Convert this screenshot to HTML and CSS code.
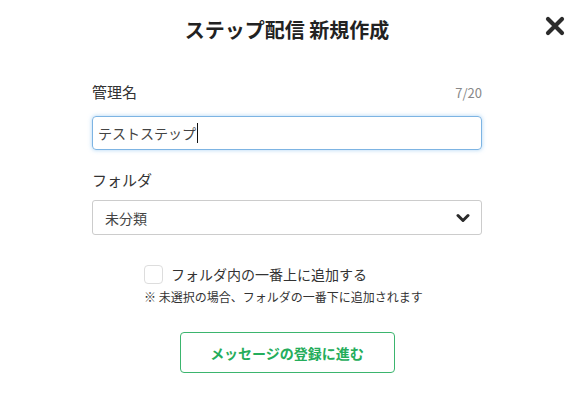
FILE: index.html
```html
<!DOCTYPE html>
<html lang="ja">
<head>
<meta charset="utf-8">
<link rel="stylesheet" href="styles.css">
</head>
<body>
<div class="modal">
  <div class="header">
    <h1 class="title">ステップ配信 新規作成</h1>
    <button class="close" aria-label="閉じる">
      <svg width="20" height="20" viewBox="0 0 20 20"><path d="M3 3 L17 17 M17 3 L3 17" stroke="#2b2b2b" stroke-width="4.2" stroke-linecap="round"/></svg>
    </button>
  </div>
  <div class="form">
    <div class="label-row">
      <span class="label">管理名</span>
      <span class="count">7/20</span>
    </div>
    <div class="input">テストステップ<span class="caret"></span></div>
    <div class="label-row folder-label">
      <span class="label">フォルダ</span>
    </div>
    <div class="select">
      <span>未分類</span>
      <svg width="14" height="10" viewBox="0 0 14 10"><path d="M2 2.5 L7 7.5 L12 2.5" fill="none" stroke="#2b2b2b" stroke-width="3" stroke-linecap="round" stroke-linejoin="round"/></svg>
    </div>
    <div class="check-row">
      <span class="checkbox"></span>
      <span class="check-label">フォルダ内の一番上に追加する</span>
    </div>
    <div class="note">※ 未選択の場合、フォルダの一番下に追加されます</div>
    <div class="actions">
      <button class="next">メッセージの登録に進む</button>
    </div>
  </div>
</div>
</body>
</html>
```

FILE: styles.css
```css
* { box-sizing: border-box; }
html, body { margin: 0; padding: 0; background: #fff; }
body {
  font-family: "Noto Sans CJK JP", "Noto Sans", sans-serif;
  color: #333;
}
.modal { width: 574px; height: 404px; }
.header {
  position: relative;
  height: 60px;
  display: flex;
  align-items: center;
  justify-content: center;
}
.title {
  margin: 0;
  font-size: 20px;
  font-weight: 700;
  color: #222;
  line-height: 24px;
}
.close {
  position: absolute;
  right: 9px;
  top: 16px;
  width: 20px;
  height: 20px;
  padding: 0;
  border: 0;
  background: none;
  display: flex;
}
.form { padding: 0 92px; }
.label-row {
  margin-top: 22px;
  height: 20px;
  display: flex;
  justify-content: space-between;
  align-items: center;
}
.label { font-size: 15px; color: #333; line-height: 20px; }
.count { font-size: 13px; color: #888; }
.input {
  margin-top: 14px;
  height: 34px;
  border: 1px solid #7db4e3;
  border-radius: 4px;
  box-shadow: 0 0 4px rgba(102, 175, 233, 0.55);
  padding: 0 5px;
  display: flex;
  align-items: center;
  font-size: 14px;
  color: #444;
}
.caret {
  display: inline-block;
  width: 1px;
  height: 20px;
  background: #111;
  margin-left: 1px;
}
.folder-label { margin-top: 20px; }
.select {
  margin-top: 10px;
  height: 35px;
  border: 1px solid #ccc;
  border-radius: 3px;
  padding: 0 11px 0 12px;
  display: flex;
  align-items: center;
  justify-content: space-between;
  font-size: 14px;
  color: #444;
}
.check-row {
  margin-top: 29px;
  padding-left: 52px;
  display: flex;
  align-items: center;
  gap: 8px;
  height: 20px;
}
.checkbox {
  width: 19px;
  height: 19px;
  border: 1px solid #ddd;
  border-radius: 4px;
  background: #fff;
}
.check-label { font-size: 14px; color: #333; }
.note {
  margin-top: 5px;
  padding-left: 52px;
  font-size: 12px;
  line-height: 16px;
  color: #333;
}
.actions {
  margin-top: 27px;
  display: flex;
  justify-content: center;
}
.next {
  width: 215px;
  height: 41px;
  border: 1px solid #3bb56e;
  border-radius: 4px;
  background: #fff;
  color: #25ad5b;
  font-family: inherit;
  font-size: 14px;
  font-weight: 700;
  padding: 0;
}
```
